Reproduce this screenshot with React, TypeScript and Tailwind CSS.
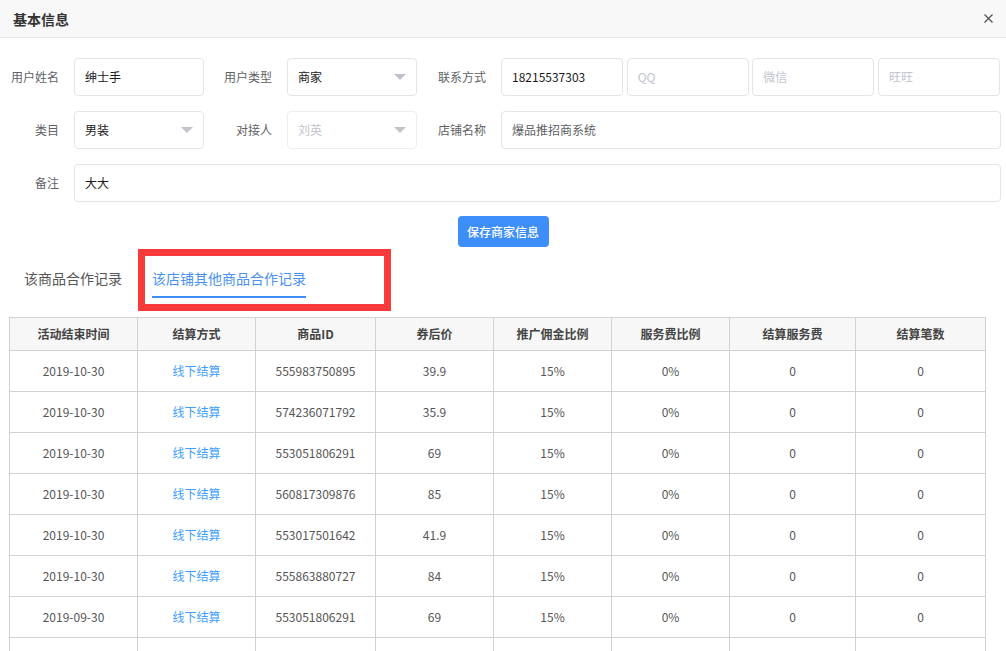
import React from "react";

type Row = {
  date: string;
  id: string;
  price: string;
};

const rows: Row[] = [
  { date: "2019-10-30", id: "555983750895", price: "39.9" },
  { date: "2019-10-30", id: "574236071792", price: "35.9" },
  { date: "2019-10-30", id: "553051806291", price: "69" },
  { date: "2019-10-30", id: "560817309876", price: "85" },
  { date: "2019-10-30", id: "553017501642", price: "41.9" },
  { date: "2019-10-30", id: "555863880727", price: "84" },
  { date: "2019-09-30", id: "553051806291", price: "69" },
];

const headers = [
  "活动结束时间",
  "结算方式",
  "商品ID",
  "券后价",
  "推广佣金比例",
  "服务费比例",
  "结算服务费",
  "结算笔数",
];

const colWidths = ["w-[128px]", "w-[118px]", "w-[120px]", "w-[118px]", "w-[118px]", "w-[118px]", "w-[126px]", "w-[130px]"];

function Caret() {
  return (
    <svg width="12" height="6" viewBox="0 0 12 6" className="shrink-0">
      <path d="M0 0 L12 0 L6 6 Z" fill="#c0c4cc" />
    </svg>
  );
}

function Label({ text, w }: { text: string; w: string }) {
  return (
    <div className={`${w} shrink-0 text-right text-[12px] text-[#606266] pr-[15px]`}>{text}</div>
  );
}

function TextBox({
  value,
  placeholder,
  w,
  muted,
}: {
  value?: string;
  placeholder?: string;
  w: string;
  muted?: boolean;
}) {
  return (
    <div
      className={`${w} h-[38px] border border-[#e2e4e8] rounded-[4px] bg-white flex items-center pl-[10px] text-[12px] ${
        value ? (muted ? "text-[#606266]" : "text-[#1a1a1a]") : "text-[#c0c4cc]"
      }`}
    >
      {value || placeholder}
    </div>
  );
}

function SelectBox({ value, disabled }: { value: string; disabled?: boolean }) {
  return (
    <div
      className={`w-[130px] shrink-0 h-[38px] border rounded-[4px] bg-white flex items-center justify-between pl-[10px] pr-[10px] text-[12px] ${
        disabled ? "border-[#eceef2] text-[#c0c4cc]" : "border-[#e2e4e8] text-[#1a1a1a]"
      }`}
    >
      <span>{value}</span>
      <Caret />
    </div>
  );
}

export default function App() {
  return (
    <div className="w-[1006px] h-[651px] overflow-hidden bg-white font-['Noto_Sans_CJK_SC','Liberation_Sans',sans-serif] leading-[20px]">
      {/* Header */}
      <div className="h-[38px] bg-[#f8f8f8] border-b border-[#e8e8e8] flex items-center justify-between pl-[13px] pr-[13px]">
        <span className="text-[14px] font-bold text-[#333]">基本信息</span>
        <svg width="9" height="9" viewBox="0 0 9 9">
          <path d="M0.5 0.5 L8.5 8.5 M8.5 0.5 L0.5 8.5" stroke="#555" strokeWidth="1.3" />
        </svg>
      </div>

      {/* Form */}
      <div className="pt-[20px] pr-[5px] flex flex-col gap-[15px]">
        <div className="flex items-center pr-[1px]">
          <Label text="用户姓名" w="w-[74px]" />
          <TextBox value="绅士手" w="w-[130px] shrink-0" />
          <Label text="用户类型" w="w-[83px]" />
          <SelectBox value="商家" />
          <Label text="联系方式" w="w-[84px]" />
          <div className="flex-1 flex gap-[3.5px]">
            <TextBox value="18215537303" w="flex-1" />
            <TextBox placeholder="QQ" w="flex-1" />
            <TextBox placeholder="微信" w="flex-1" />
            <TextBox placeholder="旺旺" w="flex-1" />
          </div>
        </div>
        <div className="flex items-center">
          <Label text="类目" w="w-[74px]" />
          <SelectBox value="男装" />
          <Label text="对接人" w="w-[83px]" />
          <SelectBox value="刘英" disabled />
          <Label text="店铺名称" w="w-[84px]" />
          <TextBox value="爆品推招商系统" muted w="flex-1" />
        </div>
        <div className="flex items-center">
          <Label text="备注" w="w-[74px]" />
          <TextBox value="大大" w="flex-1" />
        </div>
      </div>

      {/* Save */}
      <div className="flex justify-center mt-[14px]">
        <button className="w-[91px] h-[31px] rounded-[4px] bg-[#3d8ef8] text-white text-[12px] font-medium">
          保存商家信息
        </button>
      </div>

      {/* Tabs */}
      <div className="flex gap-[30px] pl-[24px] mt-[21px] text-[14px]">
        <div className="text-[#555] pb-[10px]">该商品合作记录</div>
        <div className="relative">
          <div className="text-[#4a90f0] pb-[8px] border-b-2 border-[#3d8ef8]">该店铺其他商品合作记录</div>
          <div className="absolute left-[-14px] top-[-19px] w-[253px] h-[62px] border-[7px] border-[#f83a3a] pointer-events-none" />
        </div>
      </div>

      {/* Table */}
      <div className="pl-[9px] mt-[19px]">
        <table className="table-fixed border-collapse w-[977px] text-[12px] text-center">
          <colgroup>
            {colWidths.map((w, i) => (
              <col key={i} className={w} />
            ))}
          </colgroup>
          <thead>
            <tr className="h-[33px] bg-[#f7f7f7]">
              {headers.map((h) => (
                <th key={h} className="border border-[#d2d2d2] font-bold text-[#444]">
                  {h}
                </th>
              ))}
            </tr>
          </thead>
          <tbody>
            {rows.map((r, i) => (
              <tr key={i} className="h-[41px] text-[#555]">
                <td className="border border-[#d2d2d2]">{r.date}</td>
                <td className="border border-[#d2d2d2] text-[#409eff]">线下结算</td>
                <td className="border border-[#d2d2d2]">{r.id}</td>
                <td className="border border-[#d2d2d2]">{r.price}</td>
                <td className="border border-[#d2d2d2]">15%</td>
                <td className="border border-[#d2d2d2]">0%</td>
                <td className="border border-[#d2d2d2]">0</td>
                <td className="border border-[#d2d2d2]">0</td>
              </tr>
            ))}
            {/* next row, cut off by the dialog edge */}
            <tr className="h-[41px]">
              {headers.map((h) => (
                <td key={h} className="border border-[#d2d2d2]" />
              ))}
            </tr>
          </tbody>
        </table>
      </div>
    </div>
  );
}
